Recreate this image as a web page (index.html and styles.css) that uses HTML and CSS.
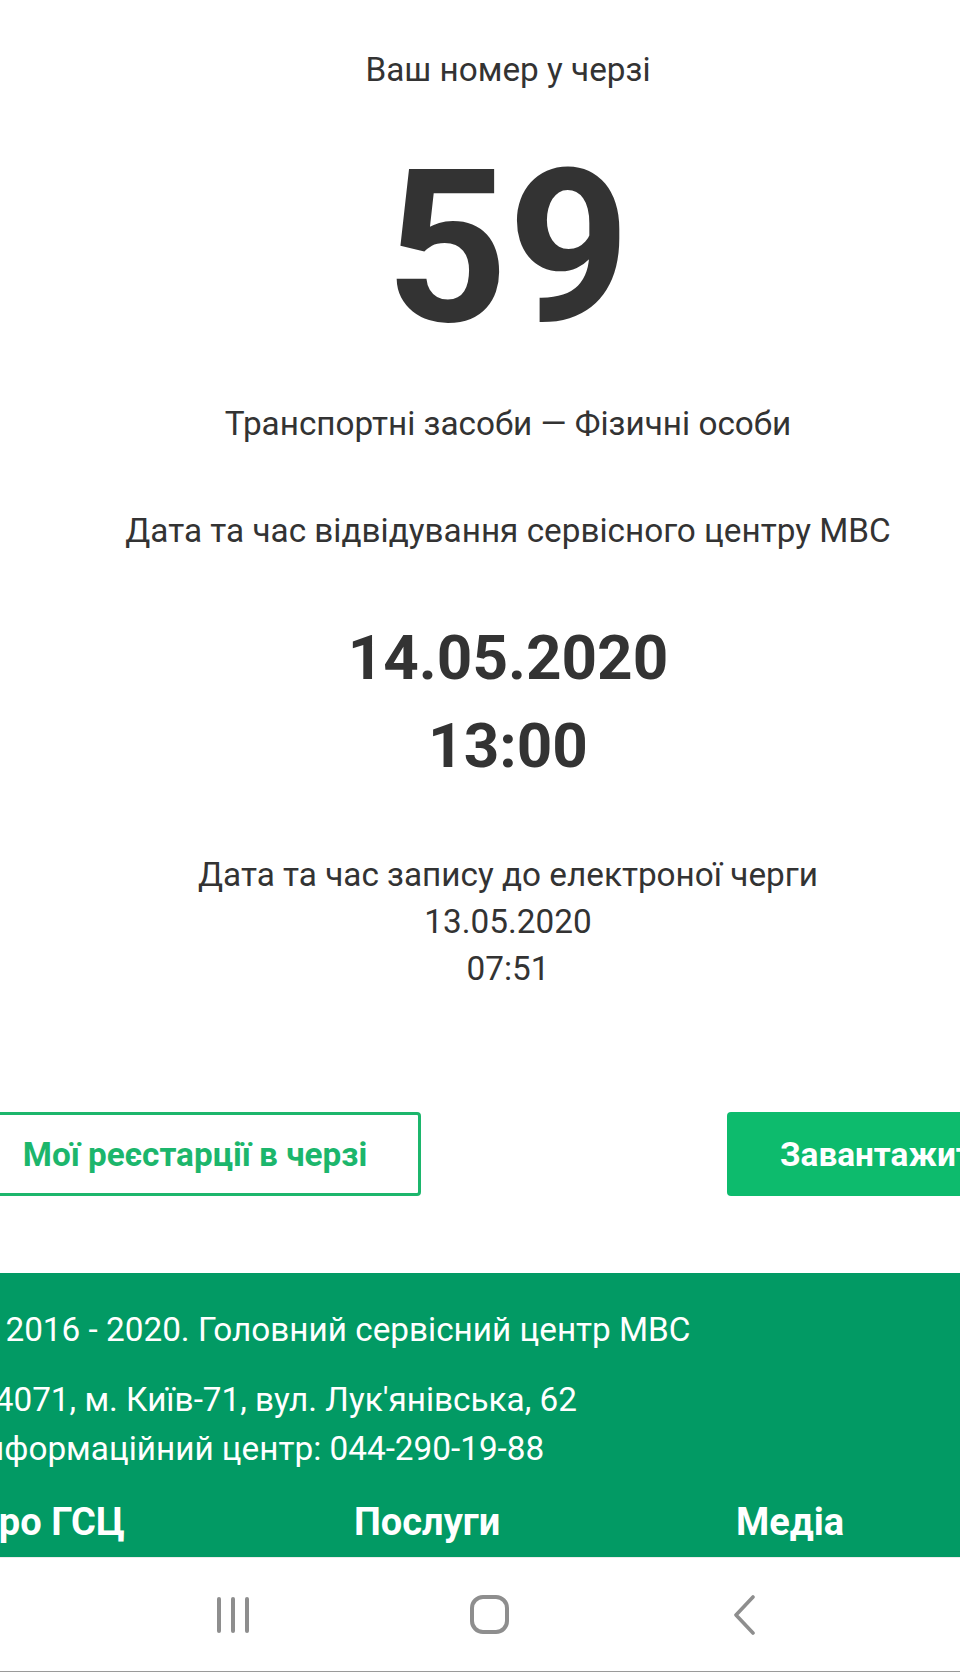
FILE: index.html
```html
<!DOCTYPE html>
<html lang="uk">
<head>
<meta charset="utf-8">
<title>Ваш номер у черзі</title>
<link rel="stylesheet" href="styles.css">
</head>
<body>
<div class="screen">
  <main class="ticket">
    <p class="label label-top">Ваш номер у черзі</p>
    <p class="number">59</p>
    <p class="label label-service">Транспортні засоби — Фізичні особи</p>
    <p class="label label-visit">Дата та час відвідування сервісного центру МВС</p>
    <p class="visit-time">14.05.2020<br>13:00</p>
    <p class="label record">Дата та час запису до електроної черги<br>13.05.2020<br>07:51</p>
  </main>
  <div class="actions">
    <a class="btn btn-outline">Мої реєстарції в черзі</a>
    <a class="btn btn-solid">Завантажити талон</a>
  </div>
  <footer class="footer">
    <div class="footer-inner">
      <p class="copy">© 2016 - 2020. Головний сервісний центр МВС</p>
      <p class="address">04071, м. Київ-71, вул. Лук'янівська, 62<br>Інформаційний центр: 044-290-19-88</p>
      <nav class="links">
        <span>Про ГСЦ</span>
        <span>Послуги</span>
        <span>Медіа</span>
      </nav>
    </div>
  </footer>
  <div class="navbar">
    <svg class="nav-icon" width="40" height="40" viewBox="0 0 40 40"><g stroke="#8e8e8e" stroke-width="4" stroke-linecap="round"><line x1="5" y1="4" x2="5" y2="36"/><line x1="19" y1="4" x2="19" y2="36"/><line x1="33" y1="4" x2="33" y2="36"/></g></svg>
    <svg class="nav-icon" width="40" height="40" viewBox="0 0 40 40"><rect x="2" y="2" width="35" height="35" rx="11" fill="none" stroke="#8e8e8e" stroke-width="4"/></svg>
    <svg class="nav-icon" width="40" height="40" viewBox="0 0 40 40"><polyline points="27,2 10,20 27,38" fill="none" stroke="#8e8e8e" stroke-width="3.6" stroke-linecap="round" stroke-linejoin="round"/></svg>
  </div>
</div>
</body>
</html>
```
FILE: styles.css
```css
* { box-sizing: border-box; }
html, body { margin: 0; padding: 0; }
body {
  background: #fff;
  font-family: Roboto, "Noto Sans", "Liberation Sans", sans-serif;
  color: #333;
}
.screen {
  width: 960px;
  height: 1672px;
  overflow: hidden;
  display: flex;
  flex-direction: column;
}
p { margin: 0; }
.ticket {
  width: 1016px;
  text-align: center;
  padding-top: 50px;
}
.label {
  font-size: 33.3px;
  line-height: 40px;
}
.number {
  font-size: 213px;
  font-weight: 700;
  line-height: 224px;
  margin-top: 46px;
}
.label-service { margin-top: 44px; }
.label-visit { margin-top: 67px; }
.visit-time {
  font-size: 62px;
  font-weight: 700;
  line-height: 88px;
  margin-top: 63px;
}
.record {
  line-height: 47px;
  margin-top: 61px;
}
.actions {
  display: flex;
  gap: 306px;
  margin-left: -31px;
  margin-top: 120px;
}
.btn {
  flex: 0 0 452px;
  height: 84px;
  border-radius: 4px;
  display: flex;
  align-items: center;
  justify-content: center;
  font-size: 33.3px;
  font-weight: 700;
  white-space: nowrap;
}
.btn-outline {
  border: 3px solid #1cb66c;
  color: #1cb66c;
}
.btn-solid {
  background: #0dbb6d;
  color: #fff;
  justify-content: flex-start;
  padding-left: 53px;
}
.footer {
  margin-top: 77px;
  height: 284px;
  background: #029a64;
  color: #fff;
  overflow: hidden;
}
.footer-inner {
  margin-left: -24px;
  padding-top: 34px;
}
.copy {
  font-size: 33.3px;
  line-height: 46px;
  margin-left: -5px;
}
.address {
  font-size: 33.3px;
  line-height: 49px;
  margin-top: 22px;
}
.links {
  display: grid;
  grid-template-columns: 382px 382px 378px;
  margin-top: 26px;
  margin-left: -4px;
  font-size: 38px;
  font-weight: 700;
  line-height: 46px;
}
.navbar {
  flex: 1;
  background: #fff;
  border-top: 1px solid #ececec;
  border-bottom: 1px solid #9a9a9a;
  display: flex;
  align-items: center;
  padding-left: 214px;
  gap: 216px;
}
.nav-icon { display: block; }
```
